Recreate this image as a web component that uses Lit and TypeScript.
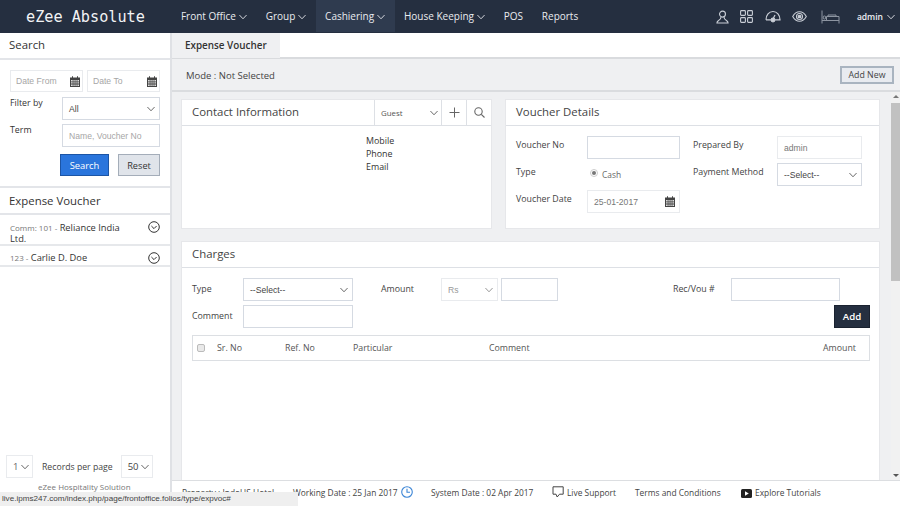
import { LitElement, html, css, svg } from "lit";
import { customElement } from "lit/decorators.js";

const chev = (w = 8, c = "#555") => html`<svg class="chev" width=${w} height="6" viewBox="0 0 9 6" fill="none" stroke=${c} stroke-width="1"><path d="M.5.8 4.5 5l4-4.200"/></svg>`;
const cal = html`<svg class="cal" width="10" height="11" viewBox="0 0 10 11"><path fill="#444" d="M0 1.500h2V.3h1v1.200h4V.3h1v1.200h2V11H0z"/><path fill="#ddd" d="M1 4h1.700v1.400H1zM3.400 4h1.300v1.400H3.400zM5.400 4h1.300v1.400H5.400zM7.400 4H9v1.400H7.400zM1 6.200h1.700v1.400H1zM3.400 6.200h1.300v1.400H3.400zM5.400 6.200h1.300v1.400H5.400zM7.400 6.200H9v1.400H7.400zM1 8.400h1.700V10H1zM3.400 8.400h1.300V10H3.400zM5.400 8.400h1.300V10H5.400zM7.400 8.400H9V10H7.400z"/></svg>`;
const circChev = html`<svg class="cc" width="12" height="12" viewBox="0 0 12 12" fill="none" stroke="#333" stroke-width="1"><circle cx="6" cy="6" r="5.300"/><path d="M3.400 5 6 7.600 8.600 5"/></svg>`;

const navIcons = [
  svg`<svg width="13" height="14" viewBox="0 0 14 15" fill="none" stroke="#c9ced6" stroke-width="1.200"><circle cx="7" cy="4.400" r="3.200"/><path d="M5.400 7.500c0 1.600-.6 2.600-2.600 3.700C1.400 12 1 12.800 1 14h12c0-1.200-.4-2-1.800-2.800-2-1.100-2.600-2.100-2.600-3.700"/></svg>`,
  svg`<svg width="13" height="13" viewBox="0 0 13 13" fill="none" stroke="#c9ced6" stroke-width="1.100"><rect x=".6" y=".6" width="4.800" height="4.800" rx=".8"/><rect x="7.600" y=".6" width="4.800" height="4.800" rx=".8"/><rect x=".6" y="7.600" width="4.800" height="4.800" rx=".8"/><rect x="7.600" y="7.600" width="4.800" height="4.800" rx=".8"/></svg>`,
  svg`<svg width="16" height="13" viewBox="0 0 16 13" fill="none" stroke="#c9ced6" stroke-width="1.200"><path d="M1 9.800C1 5 4 1.500 8 1.500s7 3.500 7 8.300h-5M6 9.800H1"/><circle cx="8" cy="10" r="1.800" fill="#c9ced6"/><path d="m8 9 2-4"/></svg>`,
  svg`<svg width="15" height="11" viewBox="0 0 15 11" fill="none" stroke="#c9ced6" stroke-width="1.100"><path d="M.7 5.500C2.500 2.300 4.800.8 7.500.8s5 1.500 6.800 4.700c-1.800 3.200-4.100 4.700-6.800 4.700S2.500 8.700.7 5.500z"/><circle cx="7.500" cy="5.500" r="3"/><circle cx="7.500" cy="5.500" r="1.300" fill="#c9ced6"/></svg>`,
  svg`<svg width="19" height="14" viewBox="0 0 19 14" fill="none" stroke="#8d95a1" stroke-width="1"><path d="M1 .5v13M1 10.500h17M18 13.500V6.500H5.500v4"/><rect x="2.200" y="6" width="2.400" height="3" rx="1"/><path d="M7 6.500V5h8v1.500"/></svg>`,
];

@customElement("app-root")
export class AppRoot extends LitElement {
  static styles = css`
    :host { display: block; width: 900px; height: 506px; position: relative; overflow: hidden; background: #fff;
      font-family: "Open Sans", "Noto Sans", sans-serif; font-size: 9px; color: #333; }
    * { box-sizing: border-box; }
    .top { height: 33px; background: #252f40; display: flex; align-items: center; color: #eef0f3; }
    .logo { width: 172px; padding-left: 26px; font: 15.2px "DejaVu Sans Mono", monospace; color: #f2f3f5; }
    .nav { display: flex; height: 32px; align-self: flex-start; font-size: 10px; margin-left: -0.5px; }
    .nav a { display: flex; align-items: center; gap: 3px; padding: 0 9.4px; color: #e9ebef; white-space: nowrap; }
    .nav a.on { background: #2f3b4f; }
    .nav .chev { margin-top: 1px; }
    .tools { margin-left: auto; display: flex; align-items: center; padding-right: 5px; }
    .tools .ic { display: flex; }
    .tools .ic:nth-child(1) { margin-right: 11px; }
    .tools .ic:nth-child(2) { margin-right: 12px; }
    .tools .ic:nth-child(3) { margin-right: 11px; }
    .tools .ic:nth-child(4) { margin-right: 14px; }
    .tools .ic:nth-child(5) { margin-right: 17px; }
    .admin { display: flex; align-items: center; gap: 4px; font-size: 8.5px; font-weight: 600; }

    .wrap { display: flex; height: 473px; }
    .side { width: 172px; flex: none; border-right: 2px solid #dfe1e5; display: flex; flex-direction: column; background: #fff; }
    .side h3 { margin: 0; font-weight: 400; font-size: 11.4px; color: #333; height: 27px; line-height: 24px; padding-left: 9px; border-bottom: 2px solid #e3e5e9; }
    .search { padding: 10px 10px 0 10px; height: 128px; border-bottom: 2px solid #e3e5e9; }
    .dates { display: flex; gap: 4px; margin-bottom: 5px; }
    .f { height: 23px; border: 1px solid #e9ebee; display: flex; align-items: center; justify-content: space-between; padding: 0 4px 0 6px; font: 8.6px "Liberation Sans", sans-serif; color: #444; background: #fff; }
    .f.strong { border: 1px solid #d5dae2; }
    .f.ph { color: #a6a6a6; }
    .f.soft { color: #777; }
    .dates .f { width: 73px; height: 22px; padding-right: 2px; padding-left: 5px; }
    .srow { display: grid; grid-template-columns: 52px 98px; margin-bottom: 4px; }
    .srow label { font-weight: 500; font-size: 8.8px; line-height: 12px; color: #333; }
    .btns { display: flex; justify-content: flex-end; gap: 9px; margin-top: 7px; }
    .btn { height: 22px; display: flex; align-items: center; justify-content: center; }
    .b-s { width: 49px; background: #2a75dc; border: 1px solid #1c55a5; color: #fff; font-size: 9.4px; }
    .b-r { width: 42px; background: #e0e4ea; border: 1px solid #a4adb9; color: #333; font-size: 9.2px; }
    .list h3 { height: 27px; line-height: 25px; }
    .item { display: grid; grid-template-columns: 1fr 12px; padding: 7px 10px 0 10px; border-bottom: 2px solid #e6e8eb; font-size: 9.3px; line-height: 11px; color: #333; }
    .item small { font-size: 8px; color: #777; }
    .i1 { height: 31px; }
    .i1 > span { width: 112px; }
    .i1 .cc { margin-top: -1px; }
    .i2 { height: 21px; padding-top: 6px; }
    .spacer { flex: 1; }
    .pager { display: flex; align-items: center; padding-left: 6px; height: 23px; font-size: 8.7px; color: #444; }
    .pager .f { height: 23px; padding: 0 3px 0 6px; font-family: "Open Sans", sans-serif; color: #666; font-size: 9.5px; }
    .pager .a { width: 27px; margin-right: 9px; }
    .pager .b { width: 32px; margin-left: 8px; color: #444; }
    .brand { height: 28px; padding: 3px 0 0 38px; font-size: 8px; color: #777; }

    .right { flex: 1; min-width: 0; display: flex; flex-direction: column; }
    .tabs { height: 26px; border-bottom: 2px solid #d9dbde; background: #fff; }
    .tab { width: 108px; height: 25px; background: #eff0f2; font-weight: 600; font-size: 9.9px; padding: 5px 0 0 13px; line-height: 14px; color: #333; }
    .mode { height: 33px; background: #eff0f2; border-bottom: 2px solid #dadcdf; display: flex; align-items: center; justify-content: space-between; padding: 0 6px 0 14px; font-weight: 500; font-size: 9.5px; color: #444; }
    .modet { padding-top: 2px; }
    .addnew { width: 54px; height: 18px; background: #e8ebf0; border: 2px solid #a9b4c0; font-weight: 400; font-size: 8.8px; color: #444; display: flex; align-items: center; justify-content: center; }
    .scroller { flex: 1; min-height: 0; display: flex; background: #eff0f2; overflow: hidden; }
    .content { width: 719px; flex: none; padding: 7px 0 0 9px; }
    .sb { width: 9px; background: #f1f1f1; display: flex; flex-direction: column; align-items: center; }
    .sb i { display: block; width: 0; height: 0; border-left: 3px solid transparent; border-right: 3px solid transparent; }
    .sb .up { border-bottom: 3px solid #777; margin-top: 3px; }
    .sb .thumb { width: 9px; height: 178px; background: #c1c1c1; margin-top: 5px; }
    .sb .dn { border-top: 3px solid #555; margin-top: auto; margin-bottom: 3px; }
    .cards { display: grid; grid-template-columns: 311px 375px; column-gap: 13px; }
    .card { background: #fff; border: 1px solid #e6e7ea; }
    .card.c1, .card.c2 { height: 130px; }
    .hd { height: 26px; border-bottom: 1px solid #dde0e5; display: flex; align-items: stretch; }
    .hd h4 { margin: 0; font-weight: 400; font-size: 11.4px; color: #444; padding: 0 0 0 10px; flex: 1; line-height: 24px; }
    .hd .cell { border-left: 1px solid #dde0e5; display: flex; align-items: center; justify-content: center; }
    .guest { width: 67px; justify-content: space-between !important; padding: 0 3px 0 6px; font-size: 7.9px; color: #555; }
    .hd .sq { width: 25px; }
    .contact { padding: 8px 0 0 184px; line-height: 13px; font-size: 8.9px; color: #333; }
    .vd { display: grid; grid-template-columns: 71px 93px 13px 84px 85px; grid-auto-rows: 22px; row-gap: 5px; padding: 10px 0 0 10px; }
    .lb { font-weight: 500; font-size: 8.8px; color: #444; line-height: 18px; white-space: nowrap; }
    .rad { display: flex; align-items: center; gap: 4px; padding-left: 3px; font-size: 8.4px; color: #666; }
    .radio { width: 8px; height: 8px; border-radius: 50%; border: 1px solid #ccc; background: #fff; display: flex; align-items: center; justify-content: center; margin-top: -2px; }
    .radio::after { content: ""; width: 4px; height: 4px; border-radius: 50%; background: #777; }
    .charges { margin-top: 12px; width: 699px; height: 260px; }
    .cf { display: grid; grid-template-columns: 51px 110px 28px 60px 57px 3px 57px 115px 58px 109px; grid-template-rows: 23px 23px; row-gap: 4px; padding: 10px 0 0 10px; height: 67px; position: relative; }
    .cf .lb { line-height: 22px; }
    .cf .c2 { grid-column: 2; grid-row: 2; }
    .cf .add { position: absolute; right: 9px; top: 37px; width: 36px; height: 23px; background: #252f40; border: 1px solid #1a2230; color: #fff; font-size: 9.7px; font-weight: 600; display: flex; align-items: center; justify-content: center; }
    .lb2 { grid-column: 1; grid-row: 2; }
    .rs { color: #999 !important; border-color: #e9ebee !important; }
    .tbl { margin: 0 9px 0 10px; height: 26px; border: 1px solid #dcdfe3; display: grid; grid-template-columns: 20px 68px 68px 136px 1fr auto; align-items: center; padding: 0 13px 0 4px; font-weight: 500; font-size: 8.8px; color: #555; }
    .cb { width: 8px; height: 8px; border: 1px solid #bbb; border-radius: 2px; background: #e9e9e9; }
    .foot { height: 26px; flex: none; border-top: 1px solid #dcdee1; background: #fff; display: flex; padding-top: 5px; font-size: 8.4px; color: #444; line-height: 14px; }
    .foot span { display: flex; align-items: flex-start; gap: 3px; white-space: nowrap; }
    .foot .play { margin-top: 3px; }
    .status { position: absolute; left: 0; bottom: 0; width: 298px; height: 14px; background: #efefef; color: #444; font: 8.1px/14px "Liberation Sans", sans-serif; padding-left: 2px; white-space: nowrap; }
    .f1 { margin-left: 10px; width: 111px; }
    .f2 { width: 138px; }
    .f3 { width: 121px; }
    .f4 { width: 83px; }
    .f5 { width: 106px; }
  `;

  render() {
    return html`
      <div class="top">
        <div class="logo">eZee Absolute</div>
        <div class="nav">
          <a>Front Office ${chev(8, "#e9ebef")}</a>
          <a>Group ${chev(8, "#e9ebef")}</a>
          <a class="on">Cashiering ${chev(8, "#e9ebef")}</a>
          <a>House Keeping ${chev(8, "#e9ebef")}</a>
          <a>POS</a>
          <a>Reports</a>
        </div>
        <div class="tools">
          ${navIcons.map((i) => html`<span class="ic">${i}</span>`)}
          <span class="admin">admin ${chev(8, "#e9ebef")}</span>
        </div>
      </div>
      <div class="wrap">
        <aside class="side">
          <h3>Search</h3>
          <div class="search">
            <div class="dates">
              <div class="f ph">Date From ${cal}</div>
              <div class="f ph">Date To ${cal}</div>
            </div>
            <div class="srow"><label>Filter by</label><div class="f strong">All ${chev()}</div></div>
            <div class="srow"><label>Term</label><div class="f strong ph">Name, Voucher No</div></div>
            <div class="btns"><div class="btn b-s">Search</div><div class="btn b-r">Reset</div></div>
          </div>
          <div class="list">
            <h3>Expense Voucher</h3>
            <div class="item i1"><span><small>Comm: 101 -</small> Reliance India Ltd.</span>${circChev}</div>
            <div class="item i2"><span><small>123 -</small> Carlie D. Doe</span>${circChev}</div>
          </div>
          <div class="spacer"></div>
          <div class="pager">
            <div class="f a">1 ${chev()}</div>Records per page<div class="f b">50 ${chev()}</div>
          </div>
          <div class="brand">eZee Hospitality Solution</div>
        </aside>
        <div class="right">
          <div class="tabs"><div class="tab">Expense Voucher</div></div>
          <div class="mode"><span class="modet">Mode : Not Selected</span><div class="addnew">Add New</div></div>
          <div class="scroller">
            <div class="content">
              <div class="cards">
                <section class="card c1">
                  <div class="hd">
                    <h4>Contact Information</h4>
                    <div class="cell guest">Guest ${chev()}</div>
                    <div class="cell sq"><svg width="11" height="11" viewBox="0 0 11 11" stroke="#666"><path d="M5.500.5v10M.5 5.500h10"/></svg></div>
                    <div class="cell sq"><svg width="11" height="11" viewBox="0 0 11 11" fill="none" stroke="#666" stroke-width="1.100"><circle cx="4.500" cy="4.500" r="3.700"/><path d="m7.300 7.300 3.200 3.200"/></svg></div>
                  </div>
                  <div class="contact">Mobile<br />Phone<br />Email</div>
                </section>
                <section class="card c2">
                  <div class="hd"><h4>Voucher Details</h4></div>
                  <div class="vd">
                    <div class="lb">Voucher No</div><div class="f strong"></div><div></div>
                    <div class="lb">Prepared By</div><div class="f soft">admin</div>
                    <div class="lb">Type</div><div class="rad"><span class="radio"></span>Cash</div><div></div>
                    <div class="lb">Payment Method</div><div class="f strong">--Select-- ${chev()}</div>
                    <div class="lb">Voucher Date</div><div class="f soft">25-01-2017 ${cal}</div>
                  </div>
                </section>
              </div>
              <section class="card charges">
                <div class="hd"><h4>Charges</h4></div>
                <div class="cf">
                  <div class="lb">Type</div>
                  <div class="f strong">--Select-- ${chev()}</div>
                  <div></div>
                  <div class="lb">Amount</div>
                  <div class="f rs">Rs ${chev(8, "#888")}</div>
                  <div></div>
                  <div class="f strong"></div>
                  <div></div>
                  <div class="lb">Rec/Vou #</div>
                  <div class="f strong"></div>
                  <div class="lb lb2">Comment</div>
                  <div class="f strong c2"></div>
                  <div class="add">Add</div>
                </div>
                <div class="tbl">
                  <span class="cb"></span><span>Sr. No</span><span>Ref. No</span><span>Particular</span><span>Comment</span><span>Amount</span>
                </div>
              </section>
            </div>
            <div class="sb"><i class="up"></i><div class="thumb"></div><i class="dn"></i></div>
          </div>
          <div class="foot">
            <span class="f1">Property : IndoUS Hotel</span>
            <span class="f2">Working Date : 25 Jan 2017
              <svg width="12" height="12" viewBox="0 0 12 12" fill="none" stroke="#3d86d6" stroke-width="1.100"><circle cx="6" cy="6" r="5.300"/><path d="M6 2.800V6.300H9"/></svg></span>
            <span class="f3">System Date : 02 Apr 2017</span>
            <span class="f4"><svg width="12" height="12" viewBox="0 0 12 12" fill="none" stroke="#444" stroke-width="1"><path d="M1 .8h10.200v7.400H7.500L5.200 11 4 8.200H1z"/></svg>Live Support</span>
            <span class="f5">Terms and Conditions</span>
            <span><svg width="11" height="9" viewBox="0 0 11 9" class="play"><rect width="11" height="9" rx="1.500" fill="#222"/><path d="M4 2.300v4.400L7.800 4.500z" fill="#fff"/></svg>Explore Tutorials</span>
          </div>
        </div>
      </div>
      <div class="status">live.ipms247.com/index.php/page/frontoffice.folios/type/expvoc#</div>
    `;
  }
}
